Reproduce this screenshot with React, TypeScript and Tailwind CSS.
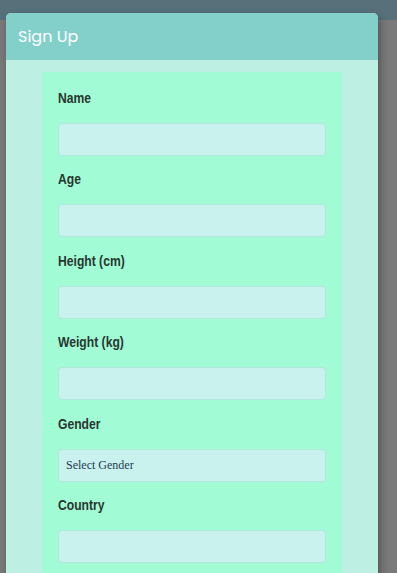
import React from "react";

const fields = ["Name", "Age", "Height (cm)", "Weight (kg)", "Gender", "Country"];

export default function App() {
  return (
    <div className="relative h-[573px] w-full overflow-hidden bg-[#7a7a7a]">
      <div className="h-[20px] w-full bg-[#57707a]" />
      <div className="absolute left-[6px] top-[13px] w-[372px] overflow-hidden rounded-t-[5px] bg-[#bdf0e2] shadow-[2px_4px_8px_rgba(0,0,0,0.35)]">
        <div className="flex h-[47px] items-center bg-[#83d0cb] px-3">
          <span className="text-[16px] text-white" style={{ fontFamily: "Poppins, Inter, 'Open Sans', sans-serif" }}>
            Sign Up
          </span>
        </div>
        <div className="px-[36px] pt-[12px]">
          <div className="bg-[#a1fcd6] px-4 pt-[16px] pb-4">
            {fields.map((f) => (
              <div key={f} className="flex flex-col">
                <div className="mb-[15px] flex h-[20px] items-center">
                  <label
                    className="block origin-left scale-x-[0.82] whitespace-nowrap text-[14.8px] font-bold leading-[20px] text-[#28362f]"
                    style={{ fontFamily: "'Liberation Sans', Arial, sans-serif" }}
                  >
                    {f}
                  </label>
                </div>
                {f === "Gender" ? (
                  <div
                    className="mb-[13.4px] flex h-[33px] items-center rounded-[4px] border border-[#b3e6dc] bg-[#c9f2ee] px-[7px] text-[12px] text-[#263b52]"
                    style={{ fontFamily: "'Liberation Serif', 'Times New Roman', serif" }}
                  >
                    Select Gender
                  </div>
                ) : (
                  <div className="mb-[13.4px] h-[33px] rounded-[4px] border border-[#b3e6dc] bg-[#c9f2ee]" />
                )}
              </div>
            ))}
          </div>
        </div>
      </div>
    </div>
  );
}
